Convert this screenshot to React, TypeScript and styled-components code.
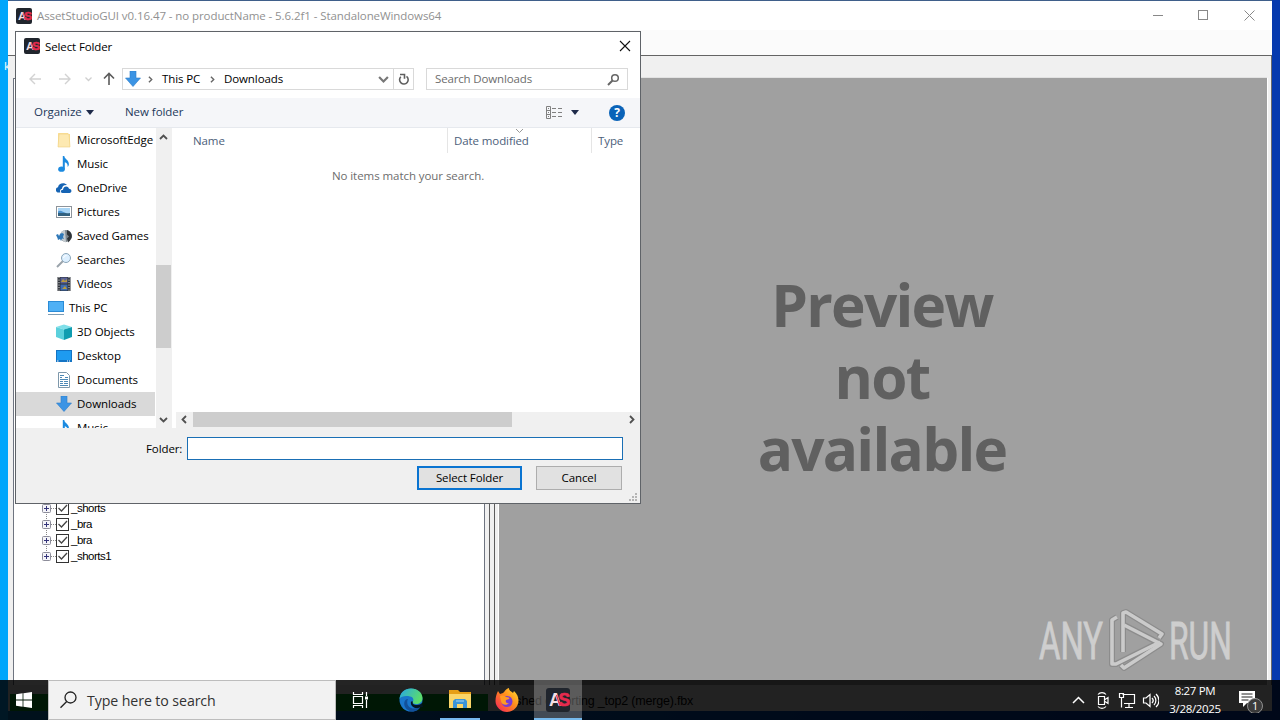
import styled, { createGlobalStyle } from 'styled-components';

const GlobalStyle = createGlobalStyle`
  * {
    box-sizing: border-box;
  }

  body {
    margin: 0;
    overflow: hidden;
  }
`;

const ui = `'Open Sans', 'Noto Sans', sans-serif`;

const DesktopArea = styled.div`
  position: relative;
  width: 1280px;
  height: 720px;
  overflow: hidden;
  font-family: ${ui};
  font-size: 11.5px;
  color: #000;
  background: linear-gradient(90deg, #00a6fb 0, #00a6fb 8px, #0078c8 8px, #0539ae 90%, #0539ae 100%);
`;

const DesktopLabel = styled.span`
  position: absolute;
  left: 4px;
  top: 58px;
  color: #fff;
`;

const MainWindow = styled.div`
  position: absolute;
  left: 8px;
  top: 0;
  width: 1264px;
  height: 711px;
  display: flex;
  flex-direction: column;
  background: #f0f0f0;
  border-top: 1px solid #3f5f8a;
`;

const TitleBar = styled.div`
  height: 29px;
  display: flex;
  align-items: center;
  background: #fff;
  color: #919191;
  padding-left: 8px;
`;

const TitleText = styled.span<{ $spacing?: number }>`
  flex: 1;
  margin-left: 5px;
  letter-spacing: ${({ $spacing }) => $spacing ?? 0}px;
  white-space: pre;
`;

const CaptionButton = styled.div`
  width: 45.5px;
  height: 29px;
  display: flex;
  align-items: center;
  justify-content: center;
`;

const MenuStrip = styled.div`
  height: 26px;
  background: #fbfbfb;
  border-bottom: 1px solid #646464;
`;

const Client = styled.div`
  flex: 1;
  display: flex;
  border-right: 1px solid #6a6a6a;
  padding-left: 5px;
`;

const TreePane = styled.div`
  width: 472px;
  background: #fff;
  border: 1px solid #6e7480;
  border-bottom: 0;
  margin-top: 22px;
  padding: 421px 0 0 28px;
`;

const Splitter = styled.div`
  width: 13px;
  display: flex;
  padding-left: 4px;
  gap: 4px;
`;

const SplitLine = styled.div`
  width: 1px;
  background: #5c5c5c;
`;

const PreviewPane = styled.div`
  flex: 1;
  margin: 21px 3px 0 0;
  border: 1px solid #fff;
  border-top: 1px solid #e2e2e2;
  border-bottom: 0;
  background: #a0a0a0;
  display: flex;
  justify-content: center;
  padding: 190px 2px 0 0;
`;

const PreviewText = styled.div`
  width: 270px;
  text-align: center;
  font-size: 58.5px;
  font-weight: 700;
  line-height: 72px;
  letter-spacing: -1.75px;
  color: #606060;
`;

const TreeRow = styled.div`
  height: 16px;
  display: flex;
  align-items: center;
  gap: 1px;
  font-family: 'Liberation Sans', sans-serif;
  font-size: 11.5px;
  line-height: 16px;
  letter-spacing: -0.5px;
`;

const StatusBar = styled.div`
  height: 26px;
  display: flex;
  align-items: flex-start;
  padding: 9px 0 0 2px;
`;

const Progress = styled.div`
  width: 478px;
  height: 17px;
  background: #06a025;
`;

const StatusText = styled.span`
  margin-left: 8px;
  font-family: 'Liberation Sans', sans-serif;
  font-size: 12.5px;
  line-height: 15px;
  letter-spacing: -0.2px;
`;

const Dialog = styled.div`
  position: absolute;
  left: 15px;
  top: 31px;
  width: 626px;
  height: 473px;
  display: flex;
  flex-direction: column;
  background: #fff;
  border: 1px solid #5f6368;
`;

const DialogTitle = styled.div`
  height: 28px;
  display: flex;
  align-items: center;
  padding-left: 8px;
`;

const NavRow = styled.div`
  height: 38px;
  display: flex;
  align-items: flex-start;
  padding: 8px 12px 0 10px;
`;

const NavArrows = styled.svg`
  width: 96px;
  height: 22px;
`;

const AddressBar = styled.div`
  width: 292px;
  height: 22px;
  display: flex;
  align-items: center;
  border: 1px solid #d9d9d9;
  line-height: 20px;
  padding-left: 2px;
`;

const Gap = styled.span<{ $width: number }>`
  width: ${({ $width }) => $width}px;
`;

const Crumb = styled.span<{ $width: number }>`
  width: ${({ $width }) => $width}px;
  margin-left: 8px;
  letter-spacing: -0.1px;
  white-space: nowrap;
`;

const RefreshBox = styled.div`
  width: 20px;
  height: 20px;
  border-left: 1px solid #d9d9d9;
  display: flex;
  align-items: center;
  justify-content: center;
`;

const SearchField = styled.div`
  width: 202px;
  height: 22px;
  margin-left: 12px;
  display: flex;
  align-items: center;
  justify-content: space-between;
  border: 1px solid #d9d9d9;
  padding: 0 7px 0 8px;
  color: #6d6d6d;
  line-height: 20px;
  letter-spacing: -0.15px;
`;

const Toolbar = styled.div`
  height: 30px;
  display: flex;
  align-items: center;
  background: #f5f6f9;
  border-bottom: 1px solid #e6e9ee;
  color: #1e395b;
  padding: 0 15px 0 18px;
`;

const ToolLabel = styled.span<{ $width: number }>`
  width: ${({ $width }) => $width}px;
  padding-bottom: 2px;
  letter-spacing: -0.05px;
  white-space: nowrap;
`;

const Caret = styled.i<{ $gap: number }>`
  border: 4px solid transparent;
  border-top: 5px solid #1e2a4a;
  border-bottom: 0;
  margin-right: ${({ $gap }) => $gap}px;
`;

const HelpBadge = styled.span`
  width: 16px;
  height: 16px;
  border-radius: 50%;
  background: #0a63b8;
  color: #fff;
  font-size: 12px;
  font-weight: 700;
  line-height: 16px;
  text-align: center;
`;

const Body = styled.div`
  height: 300px;
  display: flex;
`;

const FolderTree = styled.div`
  width: 140px;
  overflow: hidden;
`;

const FolderRow = styled.div<{ $root?: boolean; $selected?: boolean }>`
  width: 139px;
  height: 24px;
  display: flex;
  align-items: center;
  gap: 5px;
  padding-left: ${({ $root }) => ($root ? 32 : 40)}px;
  background: ${({ $selected }) => ($selected ? '#d9d9d9' : 'transparent')};
  letter-spacing: -0.06px;
  line-height: 24px;
  white-space: nowrap;

  svg {
    flex: none;
  }
`;

const VScroll = styled.div`
  width: 16px;
  height: 300px;
  background: #f0f0f0;
  display: flex;
  flex-direction: column;
  align-items: center;
`;

const VThumb = styled.div`
  width: 15px;
  height: 83px;
  background: #cdcdcd;
  margin: 120px 1px 63px 0;
`;

const FileList = styled.div`
  flex: 1;
  display: flex;
  flex-direction: column;
  padding-left: 4px;
`;

const ListHeader = styled.div`
  height: 25px;
  display: flex;
  color: #4c607a;
`;

const HeaderCell = styled.div<{ $width: number; $indent: number }>`
  position: relative;
  width: ${({ $width }) => $width}px;
  padding-left: ${({ $indent }) => $indent}px;
  border-right: 1px solid #e5e5e5;
  line-height: 26px;
  letter-spacing: -0.1px;

  &:last-child {
    border-right: 0;
  }
`;

const SortMark = styled.svg`
  position: absolute;
  left: 67px;
  top: 0;
`;

const EmptyNote = styled.div`
  flex: 1;
  padding-top: 15px;
  text-align: center;
  color: #6d6d6d;
  letter-spacing: -0.06px;
`;

const HScroll = styled.div`
  height: 16px;
  display: flex;
  align-items: flex-start;
  background: #f0f0f0;
`;

const HThumb = styled.div`
  width: 319px;
  height: 15px;
  background: #cdcdcd;
  margin-right: 111px;
`;

const Footer = styled.div`
  position: relative;
  flex: 1;
  background: #f0f0f0;
  padding: 9px 17px 0 130px;
`;

const FolderField = styled.label`
  display: flex;
  align-items: center;
  gap: 5px;
  letter-spacing: -0.1px;
`;

const FolderInput = styled.div`
  flex: 1;
  height: 23px;
  background: #fff;
  border: 1px solid #1a6fb5;
`;

const Buttons = styled.div`
  display: flex;
  justify-content: flex-end;
  gap: 14px;
  margin-top: 6px;
  padding-right: 1px;
`;

const Button = styled.button<{ $primary?: boolean }>`
  width: ${({ $primary }) => ($primary ? 105 : 86)}px;
  height: 24px;
  padding: 0 0 1px;
  font: inherit;
  letter-spacing: -0.12px;
  background: #e1e1e1;
  border: ${({ $primary }) => ($primary ? '2px solid #0a74d1' : '1px solid #adadad')};
`;

const Grip = styled.svg`
  position: absolute;
  right: 2px;
  bottom: 1px;
`;

const Watermark = styled.svg`
  position: absolute;
  left: 1030px;
  top: 600px;
`;

const Taskbar = styled.div`
  position: absolute;
  left: 0;
  top: 680px;
  width: 1280px;
  height: 40px;
  display: flex;
  background: rgba(0, 0, 0, 0.86);
  color: #fff;
`;

const TaskSlot = styled.div<{ $width: number; $active?: boolean; $running?: boolean }>`
  width: ${({ $width }) => $width}px;
  height: 40px;
  display: flex;
  align-items: center;
  justify-content: center;
  padding-top: 1px;
  background: ${({ $active }) => ($active ? 'rgba(255, 255, 255, 0.26)' : 'transparent')};
  border-bottom: ${({ $running }) => ($running ? '2px solid #76b9ed' : '2px solid transparent')};
`;

const TaskSearch = styled.div`
  width: 288px;
  height: 40px;
  display: flex;
  align-items: center;
  gap: 10px;
  padding-left: 11px;
  background: #f2f2f2;
  border: 1px solid #bdbdbd;
  color: #333;
  font-size: 14.2px;
  letter-spacing: -0.1px;
`;

const Tray = styled.div`
  margin-left: auto;
  display: flex;
  align-items: center;
  padding-right: 16px;
`;

const Clock = styled.div`
  width: 64px;
  margin: 0 12px 0 4px;
  text-align: center;
  font-size: 11.5px;
  line-height: 18px;
  letter-spacing: -0.35px;
  white-space: nowrap;
`;

function AppLogo({ size }: { size: number }) {
  return (
    <svg width={size} height={size} viewBox="0 0 24 24">
      <rect width="24" height="24" rx="3" fill="#20252d" />
      <text x="3" y="18" fontFamily="Liberation Sans" fontWeight="700" fontSize="17.500" letterSpacing="-3.200" fill="#f3dfe3">
        A<tspan fill="#e52b4f" stroke="#e52b4f" strokeWidth=".7">S</tspan>
      </text>
      <path d="M14 18L10.500 7" stroke="#e52b4f" strokeWidth="1.300" />
    </svg>
  );
}

function Chevron({ dir, color = '#505050', size = 8 }: { dir: 'up' | 'down' | 'left' | 'right'; color?: string; size?: number }) {
  const angle = { up: 0, right: 90, down: 180, left: 270 }[dir];
  return (
    <svg width={size} height={size} viewBox="0 0 8 8">
      <path d="M.8 5.8L4 2.6l3.2 3.2" fill="none" stroke={color} strokeWidth="1.6" transform={`rotate(${angle} 4 4)`} />
    </svg>
  );
}

const DownArrow = () => (
  <svg width="16" height="16" viewBox="0 0 16 16">
    <path d="M5 0h6v7h4.5L8 15.5.5 7H5z" fill="#3c94e4" stroke="#2b7cc9" strokeWidth=".6" />
  </svg>
);

const icons: Record<string, React.ReactNode> = {
  folder: (
    <>
      <path d="M2 1h10v1h2v13H2z" fill="#fbe09a" />
      <path d="M3 2h10l1 13H2z" fill="#fde9b2" stroke="#f0d080" strokeWidth=".6" />
    </>
  ),
  music: (
    <>
      <ellipse cx="5.500" cy="13.200" rx="3.300" ry="2.600" fill="#1b8ae0" />
      <path d="M6.800 0H8.300c0 3 5 4 4.600 8.500-.1 1-.8 2-1.300 2.500.4-3-.9-4.300-2.800-4.800V13.200H6.800z" fill="#1b8ae0" />
    </>
  ),
  oneDrive: (
    <>
      <path d="M1.500 12.500A2.800 2.800 0 0 1 2 7.200C2.500 3.500 8 1.800 11 5c-3.500-.3-4.800 1.500-5 3.700C4 9.200 3.600 11 4.300 12.500z" fill="#1664b4" />
      <path d="M6.500 13c-2.500-.5-2-3.300.5-3.300C7.500 5.800 12 5.500 13 8.800c3 0 3.200 3.700.6 4.200z" fill="#1664b4" />
    </>
  ),
  pictures: (
    <>
      <rect x=".5" y="2.500" width="15" height="11" fill="#fff" stroke="#8d949b" />
      <rect x="2" y="4" width="12" height="8" fill="#a9d5f5" />
      <path d="M2 9c3-2 6 1 12 0v3H2z" fill="#31617f" />
      <path d="M2 7.500c3-2 5 1 8 1.500H2z" fill="#4b93d0" />
    </>
  ),
  games: (
    <>
      <circle cx="10" cy="8" r="6" fill="#7c868d" />
      <path d="M9 2a6 6 0 0 0-2 11l3 1.500z" fill="#c3cbd0" />
      <path d="M11 2c4 1 5.500 5 4.500 8l-3 4.500-1.500-4 2-2-2-2z" fill="#2e3337" />
      <path d="M0 7l2-1 1 2 1-2 2-1 2 1-1 3 1 2-2-.5L5 13l-1-2-2 1-.5-2z" fill="#2f78b8" />
    </>
  ),
  search: (
    <>
      <path d="M1 15l6-6" stroke="#9aa3ab" strokeWidth="2" />
      <circle cx="10" cy="6" r="4.500" fill="#dcefff" stroke="#8ba6ba" />
      <path d="M7.500 6a3 3 0 0 1 3-2.500" fill="none" stroke="#fff" />
    </>
  ),
  videos: (
    <>
      <path d="M1.500 1h13v14h-13z" fill="#2c3138" />
      <path d="M3 1v14M13 1v14" stroke="#dadada" strokeDasharray="1.200 1.300" />
      <path d="M4.500 1.500h7v6h-7z" fill="#5a6298" />
      <path d="M4.500 8.500h7v6h-7z" fill="#3f6cb0" />
      <path d="M5 6l2-3 2 2 2-2v3zM6 13l3-3 2 3z" fill="#b99a3d" />
    </>
  ),
  pc: (
    <>
      <path d="M0 1h16v11H0z" fill="#2b8bd6" />
      <path d="M1 2h14v9H1z" fill="#4fb0f5" />
      <path d="M0 14.500h16" stroke="#7d9db5" />
    </>
  ),
  objects: (
    <>
      <path d="M0 3l8-2.500L16 3 8 5.500z" fill="#7fdfe9" />
      <path d="M0 3l8 2.500V16l-8-3z" fill="#5bd0dc" />
      <path d="M16 3L8 5.500V16l8-3z" fill="#109db0" />
    </>
  ),
  desktop: (
    <>
      <path d="M0 2h16v12H0z" fill="#1474c4" />
      <path d="M1 3h14v9H1z" fill="#1e9bf0" />
      <path d="M1 13h1.500M11 13h1M13 13h1" stroke="#fff" />
    </>
  ),
  documents: (
    <>
      <path d="M2.500.500h8l3 3v12h-11z" fill="#fff" stroke="#7e98ab" />
      <path d="M4 3.500h4M4 5.500h2M9 5.500h3M4 7.500h8M4 9.500h3M8 9.500h4M4 11.500h3M8 11.500h4M4 13.500h8" stroke="#4c88b5" />
    </>
  ),
};

const folders = [
  { icon: 'folder', label: 'MicrosoftEdge' },
  { icon: 'music', label: 'Music' },
  { icon: 'oneDrive', label: 'OneDrive' },
  { icon: 'pictures', label: 'Pictures' },
  { icon: 'games', label: 'Saved Games' },
  { icon: 'search', label: 'Searches' },
  { icon: 'videos', label: 'Videos' },
  { icon: 'pc', label: 'This PC', root: true },
  { icon: 'objects', label: '3D Objects' },
  { icon: 'desktop', label: 'Desktop' },
  { icon: 'documents', label: 'Documents' },
  { icon: 'downloads', label: 'Downloads', selected: true },
  { icon: 'music', label: 'Music' },
];

function TreeNode({ label, last }: { label: string; last?: boolean }) {
  return (
    <TreeRow>
      <svg width="28" height="16" viewBox="0 0 28 16">
        <path d={last ? 'M4.500 0v4' : 'M4.500 0v16'} stroke="#888" strokeDasharray="1 1" />
        <path d="M9 8.500h5" stroke="#888" strokeDasharray="1 1" />
        <rect x=".5" y="4.500" width="8" height="8" rx="1" fill="#f4f4f8" stroke="#8d8d9a" />
        <path d="M2 8.500h5M4.500 6v5" stroke="#34347a" />
        <rect x="14.500" y="2.500" width="12" height="12" fill="#fff" stroke="#333" />
        <path d="M16.500 8l3 3 5.500-6" fill="none" stroke="#444" strokeWidth="1.300" />
      </svg>
      {label}
    </TreeRow>
  );
}

function MainApp() {
  return (
    <MainWindow>
      <TitleBar>
        <AppLogo size={16} />
        <TitleText $spacing={-0.08}>AssetStudioGUI v0.16.47 - no productName - 5.6.2f1 - StandaloneWindows64</TitleText>
        <CaptionButton>
          <svg width="11" height="11"><path d="M0 5.500h10" stroke="#888" /></svg>
        </CaptionButton>
        <CaptionButton>
          <svg width="11" height="11"><rect x=".5" y=".5" width="9" height="9" fill="none" stroke="#888" /></svg>
        </CaptionButton>
        <CaptionButton>
          <svg width="11" height="11"><path d="M.5.5l10 10M10.500.5l-10 10" stroke="#888" /></svg>
        </CaptionButton>
      </TitleBar>
      <MenuStrip />
      <Client>
        <TreePane>
          <TreeNode label="_shorts" />
          <TreeNode label="_bra" />
          <TreeNode label="_bra" />
          <TreeNode label="_shorts1" last />
        </TreePane>
        <Splitter>
          <SplitLine />
          <SplitLine />
        </Splitter>
        <PreviewPane>
          <PreviewText>
            Preview
            <br />
            not
            <br />
            available
          </PreviewText>
        </PreviewPane>
      </Client>
      <StatusBar>
        <Progress />
        <StatusText>Finished exporting _top2 (merge).fbx</StatusText>
      </StatusBar>
    </MainWindow>
  );
}

function SelectFolderDialog() {
  return (
    <Dialog>
      <DialogTitle>
        <AppLogo size={16} />
        <TitleText $spacing={-0.12}>Select Folder</TitleText>
        <svg width="21" height="12" viewBox="0 0 21 12">
          <path d="M1 1l10 10M11 1L1 11" stroke="#111" strokeWidth="1.100" />
        </svg>
      </DialogTitle>
      <NavRow>
        <NavArrows viewBox="0 0 96 22" fill="none">
          <path d="M15 11H4m5-5l-5 5 5 5M33 11h11m-5-5l5 5-5 5" stroke="#d2d2d2" strokeWidth="1.400" />
          <path d="M59.500 9.500l3 3 3-3" stroke="#cfcfcf" strokeWidth="1.300" />
          <path d="M83 17V5.500M78 10.500l5-5 5 5" stroke="#5b5b5b" strokeWidth="1.600" />
        </NavArrows>
        <AddressBar>
          <DownArrow />
          <Gap $width={6} />
          <Chevron dir="right" size={7} color="#666" />
          <Crumb $width={41}>This PC</Crumb>
          <Gap $width={6} />
          <Chevron dir="right" size={7} color="#666" />
          <Crumb $width={154}>Downloads</Crumb>
          <Chevron dir="down" size={11} color="#777" />
          <Gap $width={4} />
          <RefreshBox>
            <svg width="12" height="14" viewBox="0 0 12 14" fill="none" stroke="#5f5f5f" strokeWidth="1.600">
              <path d="M8.500 4.300A4.300 4.300 0 1 1 2.800 4.700" />
              <path d="M2 2.500h4.500v4.300" />
            </svg>
          </RefreshBox>
        </AddressBar>
        <SearchField>
          Search Downloads
          <svg width="13" height="13" viewBox="0 0 13 13" fill="none" stroke="#666" strokeWidth="1.500">
            <circle cx="8" cy="5" r="3.300" />
            <path d="M5.500 7.500L1 12" strokeWidth="2" />
          </svg>
        </SearchField>
      </NavRow>
      <Toolbar>
        <ToolLabel $width={52}>Organize</ToolLabel>
        <Caret $gap={31} />
        <ToolLabel $width={421}>New folder</ToolLabel>
        <svg width="17" height="13" viewBox="0 0 17 13" fill="none" stroke="#808080">
          <path d="M.5.5h4v12h-4zM.5 4.500h4M.5 8.500h4M2 2.500h1M2 6.500h1M2 10.500h1" />
          <path d="M6 2.500h4M12 2.500h4M6 6.500h4M12 6.500h4M6 10.500h4M12 10.500h4" />
        </svg>
        <Gap $width={8} />
        <Caret $gap={30} />
        <HelpBadge>?</HelpBadge>
      </Toolbar>
      <Body>
        <FolderTree>
          {folders.map((f, i) => (
            <FolderRow key={i} $root={f.root} $selected={f.selected}>
              {f.icon === 'downloads' ? (
                <DownArrow />
              ) : (
                <svg width="16" height="16" viewBox="0 0 16 16">{icons[f.icon]}</svg>
              )}
              <span>{f.label}</span>
            </FolderRow>
          ))}
        </FolderTree>
        <VScroll>
          <svg width="10" height="17" viewBox="0 0 10 17"><path d="M1 11L4.500 7.500 8 11" fill="none" stroke="#505050" strokeWidth="1.800" /></svg>
          <VThumb />
          <svg width="10" height="17" viewBox="0 0 10 17"><path d="M1 7L4.500 10.500 8 7" fill="none" stroke="#505050" strokeWidth="1.800" /></svg>
        </VScroll>
        <FileList>
          <ListHeader>
            <HeaderCell $width={272} $indent={17}>Name</HeaderCell>
            <HeaderCell $width={144} $indent={6}>
              Date modified
              <SortMark width="9" height="6"><path d="M1 1l3.500 3.500L8 1" fill="none" stroke="#999" /></SortMark>
            </HeaderCell>
            <HeaderCell $width={48} $indent={6}>Type</HeaderCell>
          </ListHeader>
          <EmptyNote>No items match your search.</EmptyNote>
          <HScroll>
            <svg width="17" height="15" viewBox="0 0 17 15"><path d="M10 4L6.500 7.500 10 11" fill="none" stroke="#505050" strokeWidth="1.800" /></svg>
            <HThumb />
            <svg width="17" height="15" viewBox="0 0 17 15"><path d="M7 4L10.500 7.500 7 11" fill="none" stroke="#505050" strokeWidth="1.800" /></svg>
          </HScroll>
        </FileList>
      </Body>
      <Footer>
        <FolderField>
          Folder:
          <FolderInput />
        </FolderField>
        <Buttons>
          <Button $primary>Select Folder</Button>
          <Button>Cancel</Button>
        </Buttons>
        <Grip width="10" height="10" fill="#b5b5b5">
          <path d="M7 1h2v2H7zM4 4h2v2H4zM7 4h2v2H7zM1 7h2v2H1zM4 7h2v2H4zM7 7h2v2H7z" />
        </Grip>
      </Footer>
    </Dialog>
  );
}

export default function App() {
  return (
    <>
      <GlobalStyle />
      <DesktopArea>
        <DesktopLabel>k</DesktopLabel>
        <MainApp />
        <SelectFolderDialog />
        <Watermark width="230" height="80" viewBox="0 0 230 80" fill="none">
          <g fontFamily="Roboto" fontSize="51" fill="#cecece" stroke="#cecece" strokeWidth=".8">
            <text x="9" y="59" textLength="64" lengthAdjust="spacingAndGlyphs">ANY</text>
            <text x="139" y="59" textLength="63" lengthAdjust="spacingAndGlyphs">RUN</text>
          </g>
          <g stroke="#8c8c8c" strokeWidth="6" strokeLinejoin="round">
            <path d="M87 17l-5 3v44l4 0 44-22" />
            <path d="M93 52V13l3-1 36 22-3 4" />
            <path d="M94 25l37 19-37 24-3-3" />
          </g>
          <g stroke="#cbcbcb" strokeWidth="3.600" strokeLinejoin="round">
            <path d="M87 17l-5 3v44l4 0 44-22" />
            <path d="M93 52V13l3-1 36 22-3 4" />
            <path d="M94 25l37 19-37 24-3-3" />
          </g>
        </Watermark>
        <Taskbar>
          <TaskSlot $width={48}>
            <svg width="16" height="16" viewBox="0 0 16 16" fill="#fff">
              <path d="M0 2.200L6.600 1.300v6.300H0zM7.400 1.200L16 0v7.600H7.400zM0 8.400h6.600v6.300L0 13.800zM7.400 8.400H16V16l-8.600-1.200z" />
            </svg>
          </TaskSlot>
          <TaskSearch>
            <svg width="17" height="18" viewBox="0 0 17 18" fill="none" stroke="#222" strokeWidth="1.300">
              <circle cx="10.500" cy="6.500" r="5.500" />
              <path d="M6.700 10.500L.5 16.800" />
            </svg>
            Type here to search
          </TaskSearch>
          <TaskSlot $width={48}>
            <svg width="17" height="16" viewBox="0 0 17 16" fill="none" stroke="#fff" strokeWidth="1.200">
              <path d="M1.500 0v2.500h9V0M1.500 16v-2.500h9V16M1.500 4.500h9v7h-9zM14.500 0v4M14.500 8v8" />
              <path d="M13 4.500h3v3h-3z" fill="#fff" stroke="none" />
            </svg>
          </TaskSlot>
          <TaskSlot $width={54}>
            <svg width="24" height="24" viewBox="0 0 24 24">
              <defs>
                <linearGradient id="edgeTop" x1="0" y1="0" x2="1" y2=".4">
                  <stop offset="0" stopColor="#27a7e6" />
                  <stop offset="1" stopColor="#5bdc6c" />
                </linearGradient>
              </defs>
              <circle cx="12" cy="12" r="11.500" fill="#1976cc" />
              <path d="M.5 11C1 4.500 6 .5 12 .5c7 0 11.500 4.500 11.500 9.500 0 4-3 6-6.500 6-3 0-3.800-1-3-2.500.8-1.300.7-4.500-3-5C7 7.500 2 8 .5 11z" fill="url(#edgeTop)" />
              <path d="M9 11c-3 6 3 12 10 8.500 1-.5 2.500-.8 1.500.8C17 25 9 24.500 6 19 4 15 6 11 9 11z" fill="#12509a" />
              <path d="M14 13.500c-1.200 2 .5 3.500 4 3.500 2 0 4-.8 5-2l1 4-3.500.5c-5.500 2-9.500-2-8.500-6z" fill="#041523" />
            </svg>
          </TaskSlot>
          <Gap $width={2} />
          <TaskSlot $width={40} $running>
            <svg width="22" height="19" viewBox="0 0 22 19">
              <path d="M0 0h9l2 2h11v4H0z" fill="#e79f16" />
              <path d="M0 4h22v14H0z" fill="#fbd568" />
              <path d="M4 18v-7l2-2h10l2 2v7h-4v-4H8v4z" fill="#3c94d6" />
              <path d="M7 11h8" stroke="#a7d8f5" />
            </svg>
          </TaskSlot>
          <TaskSlot $width={54}>
            <svg width="24" height="24" viewBox="0 0 24 24">
              <defs>
                <linearGradient id="foxBody" x1="1" y1="0" x2="0" y2="1">
                  <stop offset="0" stopColor="#ffe233" />
                  <stop offset=".45" stopColor="#ff8a1c" />
                  <stop offset="1" stopColor="#f5195f" />
                </linearGradient>
              </defs>
              <path d="M3 3l2 3 3-1c1 0 2-4 6-5 0 3 2 3 4 5l1-2c3 3 4.500 6 4.500 9.500C23.500 19 18 24 12 24S.5 19 .5 13C.5 9 1.500 6 3 3z" fill="url(#foxBody)" />
              <circle cx="12" cy="13.500" r="5.500" fill="#7a3bd3" />
              <path d="M5 8c3-1 5 0 6 1 3 0 4 1 3 2l-3 1c-1 2 1 4 3 3-2 3-8 2-8-2z" fill="#ff9b22" />
            </svg>
          </TaskSlot>
          <TaskSlot $width={48} $active $running>
            <AppLogo size={24} />
          </TaskSlot>
          <Tray>
            <svg width="90" height="20" viewBox="0 0 90 20" fill="none" stroke="#fff" strokeWidth="1.200">
              <path d="M4 13l5.500-5.500L15 13" strokeWidth="1.500" />
              <path d="M29.500 6.500h6v8h-6zM36 9.500l3-2v6l-3-2M29 4.500c2-2.500 6-2.500 8 0M29 16.500c2 2.500 6 2.500 8 0" />
              <path d="M53.500 4.500h12v9H55M60 13.500V17M56 17.500h8M50.500 3.500h4v4h-4zM52.500 7.500v10" />
              <path d="M74.500 8h2.500l4-3.500v12L77 13h-2.500zM83 8c1.500 1.500 1.500 3.500 0 5M85 6c2.500 2.500 2.500 6.500 0 9M87 4c4 4 4 9 0 13" />
            </svg>
            <Clock>
              8:27 PM
              <br />
              3/28/2025
            </Clock>
            <svg width="25" height="26" viewBox="0 0 25 26">
              <path d="M0 4h16v12H8l-4 4v-4H0z" fill="#fff" />
              <path d="M2.500 7h11M2.500 10h11M2.500 13h7" stroke="#222" />
              <circle cx="16" cy="19" r="7.500" fill="#3b3b3b" stroke="#909090" />
              <text x="13" y="23" fontFamily="Open Sans" fontSize="11" fill="#fff">1</text>
            </svg>
          </Tray>
        </Taskbar>
      </DesktopArea>
    </>
  );
}
